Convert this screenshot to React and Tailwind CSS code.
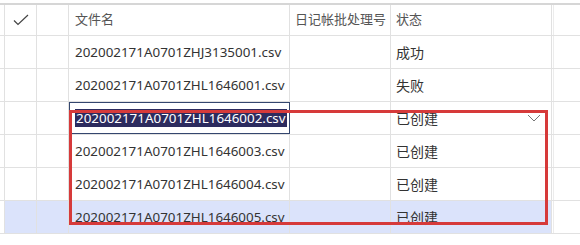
import React from 'react';

const rows = [
  { name: '202002171A0701ZHJ3135001.csv', status: '成功' },
  { name: '202002171A0701ZHL1646001.csv', status: '失败' },
  { name: '202002171A0701ZHL1646002.csv', status: '已创建', editing: true },
  { name: '202002171A0701ZHL1646003.csv', status: '已创建' },
  { name: '202002171A0701ZHL1646004.csv', status: '已创建' },
  { name: '202002171A0701ZHL1646005.csv', status: '已创建', selected: true },
];

const font = { fontFamily: '"Segoe UI", "Noto Sans", "Noto Sans CJK SC", sans-serif' };

const App = () => {
  return (
    <div className="relative w-[580px] h-[245px] bg-white overflow-hidden text-[13.4px]" style={font}>
      <div className="h-[3px] bg-white" />
      <div className="border-t-2 border-[#d6d6d6]">
        {/* header */}
        <div className="flex h-[31px] border-b border-[#e1e1e1] text-[#555]">
          <div className="w-[5px] border-r border-[#e1e1e1]" />
          <div className="w-[32px] border-r border-[#e1e1e1] flex items-center justify-center">
            <svg width="16" height="12" viewBox="0 0 16 12" fill="none" stroke="#444" strokeWidth="1.2">
              <path d="M1 6.5l4 4L15 1" />
            </svg>
          </div>
          <div className="w-[32px] border-r border-[#e1e1e1]" />
          <div className="w-[221px] border-r border-[#e1e1e1] flex items-center pl-[6px] text-[13px]">文件名</div>
          <div className="w-[101px] border-r border-[#e1e1e1] flex items-center pl-[5px] text-[13px]">日记帐批处理号</div>
          <div className="w-[161px] border-r border-[#e1e1e1] flex items-center pl-[5px] text-[13px]">状态</div>
          <div className="w-[2px] border-r border-[#ececec]" />
          <div className="flex-1" />
        </div>
        {rows.map((r) => (
          <div
            key={r.name}
            className={`flex h-[33px] border-b border-[#e1e1e1] text-[#333] ${r.selected ? 'bg-[#dbe3fb]' : ''}`}
          >
            <div className="w-[5px] border-r border-[#e1e1e1] bg-white" />
            <div className="w-[32px] border-r border-[#e1e1e1]" />
            <div className="w-[32px] border-r border-[#e1e1e1]" />
            {r.editing ? (
              <div className="w-[221px] border border-[#34466e] flex items-center pl-[5px] bg-white">
                <span className="bg-[#2c2b5e] text-white leading-[18px] px-[1px]">{r.name}</span>
              </div>
            ) : (
              <div className="w-[221px] border-r border-[#e1e1e1] flex items-center pl-[6px]">{r.name}</div>
            )}
            <div className="w-[101px] border-r border-[#e1e1e1]" />
            <div className={`w-[161px] border-r border-[#e1e1e1] flex items-center justify-between pl-[5px] pr-[10px] text-[14px] ${r.editing ? 'bg-white' : ''}`}>
              <span>{r.status}</span>
              {r.editing && (
                <svg width="14" height="8" viewBox="0 0 14 8" fill="none" stroke="#777" strokeWidth="1">
                  <path d="M1 1l6 6 6-6" />
                </svg>
              )}
            </div>
            <div className="w-[2px] border-r border-[#ececec] bg-white" />
            <div className="flex-1 bg-white" />
          </div>
        ))}
      </div>
      {/* red highlight box */}
      <div className="absolute left-[69px] top-[110px] w-[479px] h-[115px] border-[3px] border-[#d63a3a] pointer-events-none" />
    </div>
  );
};

export default App;
